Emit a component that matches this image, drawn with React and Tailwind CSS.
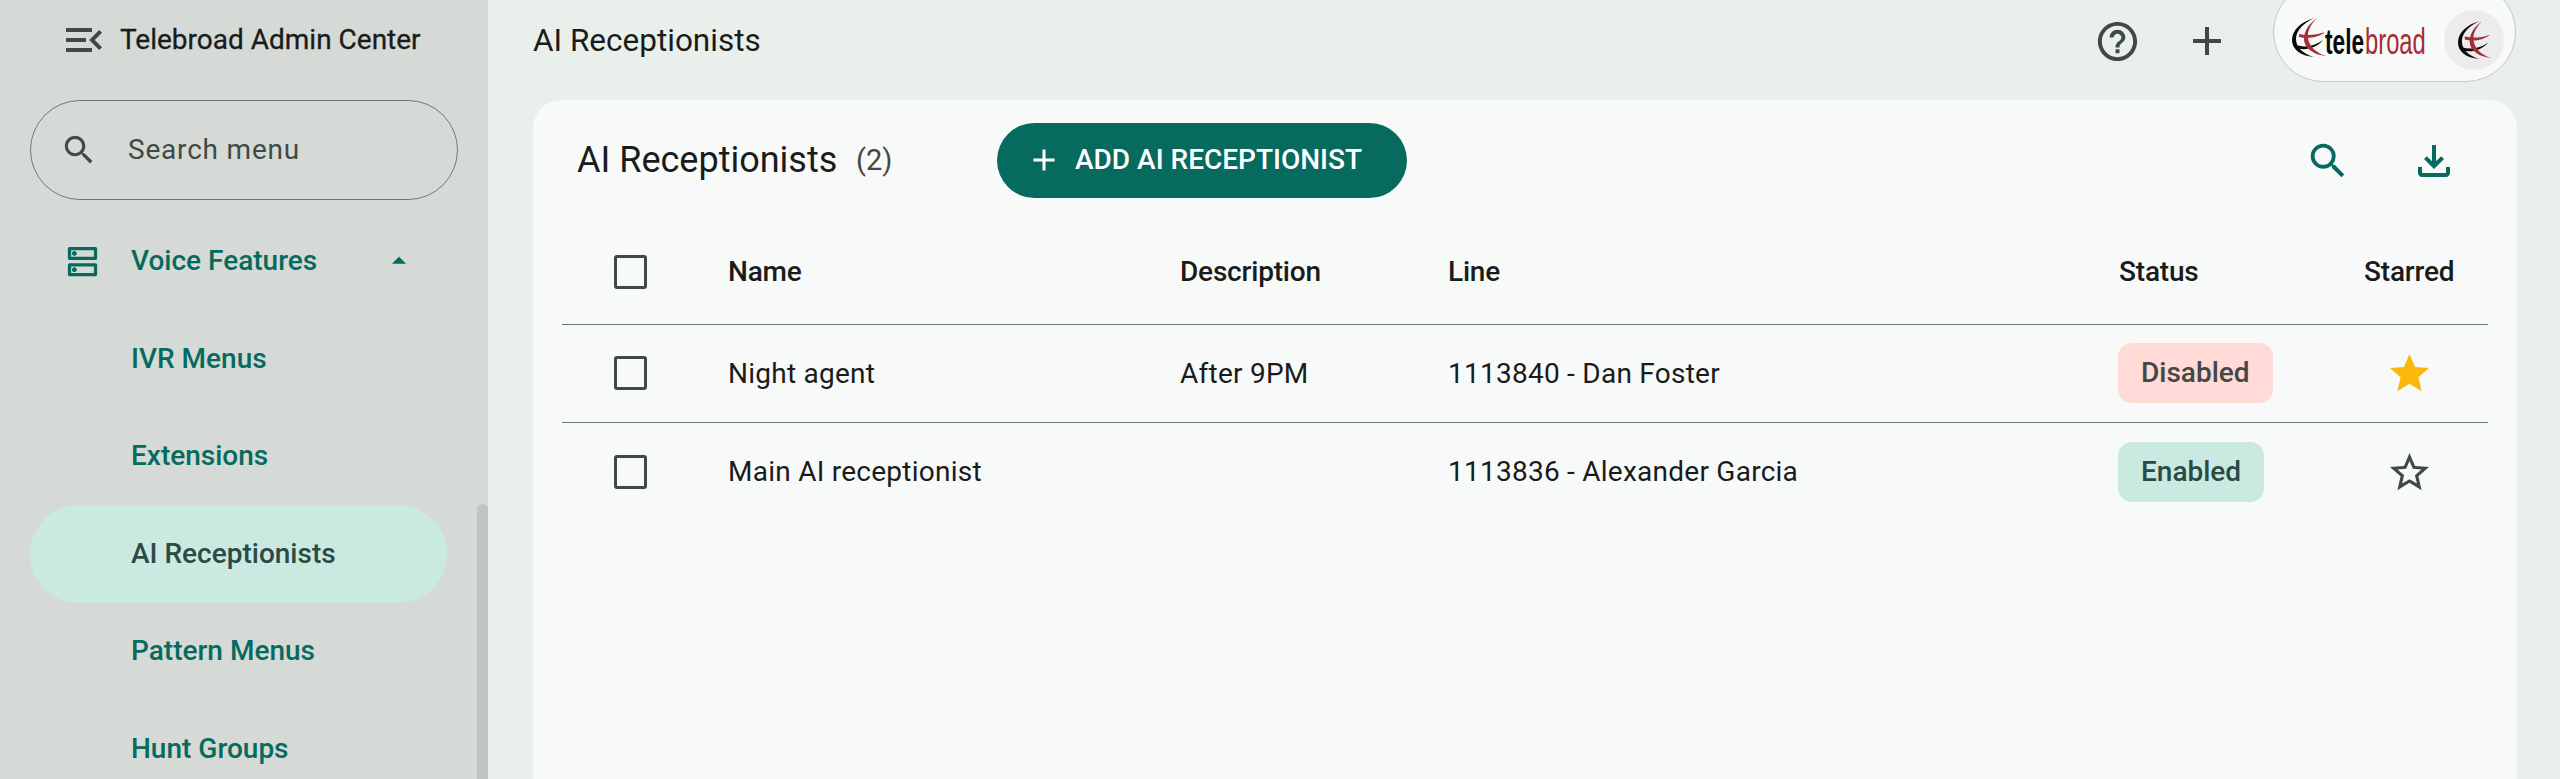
import {
  MdSearch,
  MdAdd,
  MdOutlineFileDownload,
  MdStar,
  MdStarBorder,
  MdHelpOutline,
  MdMenuOpen,
  MdOutlineDns,
  MdArrowDropUp,
} from 'react-icons/md'

const navItems = ['IVR Menus', 'Extensions', 'AI Receptionists', 'Pattern Menus', 'Hunt Groups']

const rows = [
  { name: 'Night agent', description: 'After 9PM', line: '1113840 - Dan Foster', status: 'Disabled', starred: true },
  { name: 'Main AI receptionist', description: '', line: '1113836 - Alexander Garcia', status: 'Enabled', starred: false },
]

const rowGrid = 'grid grid-cols-[166px_452px_268px_671px_245px_124px] items-center'

function Globe({ className }) {
  return (
    <svg viewBox="0 0 34 41" className={className}>
      <path d="M22 1C9 5 0 13 0 23c0 9 8 16 22 17C11 37 4 30 4 22 4 13 12 6 22 1z" fill="#0a0a0a" />
      <path d="M4 28c9 3 19 1 27-5-6 8-18 11-27 8z" fill="#0a0a0a" />
      <path d="M25 1c-6 6-10 13-9 20 1 8 8 15 18 18-12-1-22-8-22-17 0-9 6-16 13-21z" fill="#a92b33" />
      <path d="M7 17c8 2 18 1 26-2-7 6-18 7-26 5z" fill="#a92b33" />
    </svg>
  )
}

function Checkbox() {
  return (
    <div className="ml-[52px] -mt-px w-[33px] h-[34px] rounded-[3px] border-[3px] border-[#3f4946]" />
  )
}

function Sidebar() {
  return (
    <aside className="relative w-[488px] shrink-0 h-full overflow-hidden bg-[#d5dad6]">
      <div className="flex items-center h-[80px] pl-[60px]">
        <MdMenuOpen className="w-[48px] h-[48px] text-[#3f4946]" />
        <span className="ml-[12px] text-[28px] text-[#191c1b] [-webkit-text-stroke:0.3px_#191c1b]">Telebroad Admin Center</span>
      </div>

      <div className="mx-[30px] mt-[20px] w-[428px] h-[100px] rounded-full border border-[#6f7975] flex items-center pl-[29px] gap-[30px]">
        <MdSearch className="w-[38px] h-[38px] text-[#3f4946]" />
        <span className="text-[28px] tracking-[0.8px] text-[#3f4946]">Search menu</span>
      </div>

      <div className="flex items-center h-[98px] mt-[12px] pl-[63px]">
        <MdOutlineDns className="w-[39px] h-[39px] text-[#076a5e]" />
        <span className="ml-[29px] text-[28px] font-medium text-[#076a5e]">Voice Features</span>
        <MdArrowDropUp className="ml-auto mr-[72px] w-[34px] h-[34px] text-[#076a5e]" />
      </div>

      <nav className="flex flex-col">
        {navItems.map((item) => (
          <div
            key={item}
            className={`ml-[30px] w-[417px] h-[97.5px] rounded-full flex items-center pl-[101px] text-[28px] font-medium ${
              item === 'AI Receptionists' ? 'bg-[#caeae1] text-[#2b4a44]' : 'text-[#076a5e]'
            }`}
          >
            {item}
          </div>
        ))}
      </nav>

      <div className="absolute right-0 top-[504px] bottom-0 w-[11px] rounded-t-full bg-[#bcc5c1]" />
    </aside>
  )
}

function Topbar() {
  return (
    <header className="flex items-center h-[82px] mb-[18px]">
      <h1 className="text-[31.5px] text-[#191c1b]">AI Receptionists</h1>
      <div className="ml-auto flex items-center">
        <MdHelpOutline className="w-[47px] h-[47px] text-[#3f4946]" />
        <MdAdd className="ml-[42px] w-[48px] h-[48px] text-[#3f4946]" />
        <div className="ml-[42px] mr-px w-[243px] h-[100px] -mt-[18px] pt-[16px] rounded-full border border-[#c4c8c4] bg-[#f7faf8] flex items-center pl-[18px]">
          <Globe className="w-[34px] h-[41px] -mt-[5px]" />
          <svg viewBox="0 0 101 44" className="-ml-px w-[101px] h-[44px] overflow-visible">
            <text transform="translate(0 36) scale(0.63 1)" fontSize="36" fontWeight="700" fill="#0a0a0a" fontFamily="'Liberation Sans', sans-serif">tele</text>
            <text transform="translate(40 36) scale(0.66 1)" fontSize="36" fill="#a92b33" fontFamily="'Liberation Sans', sans-serif">broad</text>
          </svg>
          <div className="ml-[18px] w-[60px] h-[60px] rounded-full bg-[#ececec] flex items-center justify-center">
            <Globe className="w-[33px] h-[42px]" />
          </div>
        </div>
      </div>
    </header>
  )
}

function Table() {
  return (
    <div className="mx-[29px]">
      <div className={`${rowGrid} h-[105px] text-[28px] tracking-[-0.2px] font-medium text-[#191c1b] border-b border-[#6f7975]`}>
        <Checkbox />
        <span>Name</span>
        <span>Description</span>
        <span>Line</span>
        <span>Status</span>
        <span>Starred</span>
      </div>
      {rows.map((row, i) => (
        <div
          key={row.name}
          className={`${rowGrid} h-[98px] text-[28px] tracking-[0.25px] text-[#191c1b] ${i === 0 ? 'border-b border-[#6f7975]' : ''}`}
        >
          <Checkbox />
          <span>{row.name}</span>
          <span>{row.description}</span>
          <span>{row.line}</span>
          <span className="-mt-px">
            <span
              className={`inline-flex items-center h-[60px] -ml-px px-[23px] rounded-[14px] font-medium tracking-normal ${
                row.status === 'Disabled' ? 'bg-[#ffdad6] text-[#444744]' : 'bg-[#caeae1] text-[#2b4a44]'
              }`}
            >
              {row.status}
            </span>
          </span>
          {row.starred ? (
            <MdStar className="ml-[22px] w-[47px] h-[47px] text-[#fbb80b]" />
          ) : (
            <MdStarBorder className="ml-[22px] w-[47px] h-[47px] text-[#3f4946]" />
          )}
        </div>
      ))}
    </div>
  )
}

export default function App() {
  return (
    <div className="flex w-[2560px] h-[779px] overflow-hidden bg-[#e9efeb] font-['Roboto',sans-serif]">
      <Sidebar />
      <main className="flex-1 pl-[45px] pr-[45px]">
        <Topbar />
        <section className="h-[700px] rounded-t-[28px] bg-[#f7faf8]">
          <div className="flex items-center h-[120px] pl-[44px] pr-[59px]">
            <h2 className="w-[263px] text-[36px] text-[#191c1b] leading-none whitespace-nowrap">AI Receptionists</h2>
            <span className="ml-[16px] w-[34px] text-[29px] text-[#444744] leading-none">(2)</span>
            <button className="ml-[107px] h-[75px] w-[410px] rounded-full bg-[#076a5e] text-white flex items-center pl-[29px] gap-[13px] text-[28px] font-medium">
              <MdAdd className="w-[36px] h-[36px]" />
              ADD AI RECEPTIONIST
            </button>
            <MdSearch className="ml-auto mt-px w-[46px] h-[46px] text-[#076a5e]" />
            <MdOutlineFileDownload className="ml-[59px] mt-[2px] w-[48px] h-[48px] text-[#076a5e]" />
          </div>
          <Table />
        </section>
      </main>
    </div>
  )
}
